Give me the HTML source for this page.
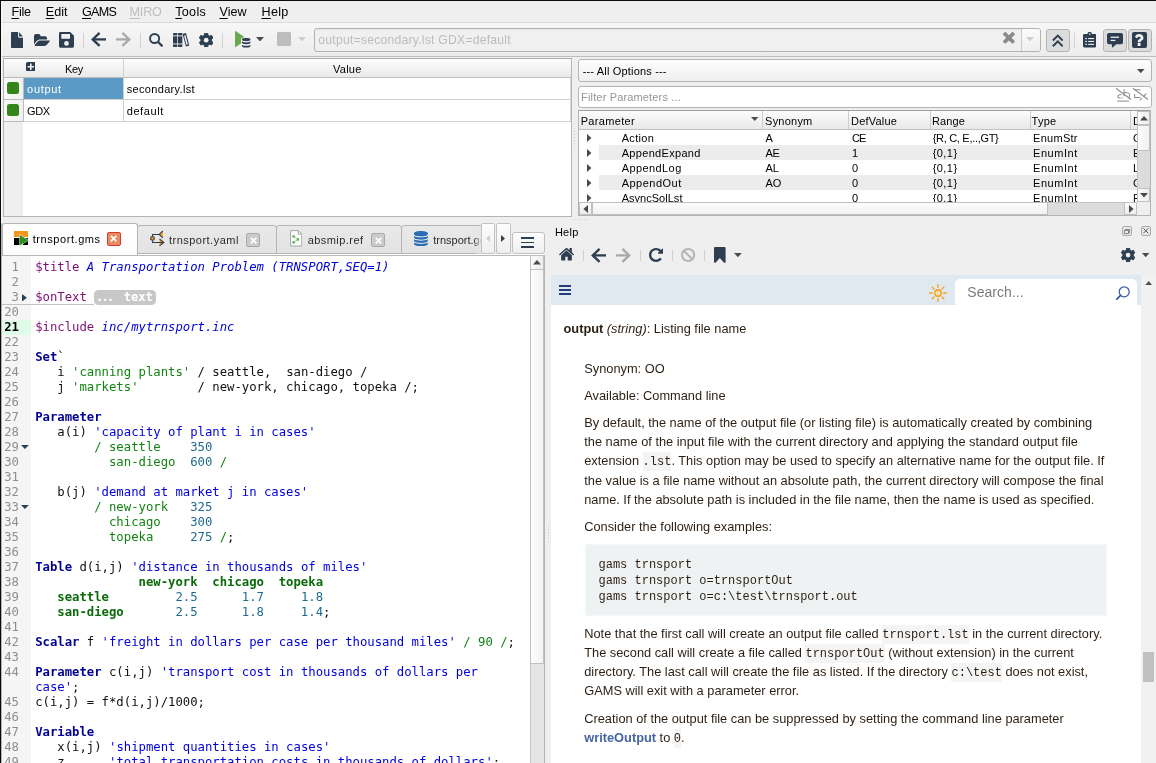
<!DOCTYPE html>
<html lang="en"><head><meta charset="utf-8"><title>GAMS Studio</title>
<style>
html,body{margin:0;padding:0}
body{width:1156px;height:763px;overflow:hidden;background:#efefef;position:relative}
#app{position:absolute;left:0;top:0;width:1156px;height:763px;overflow:hidden;background:#efefef;will-change:transform}
#app div,#app svg,#app span.t{position:absolute;box-sizing:border-box}
#app span.t{white-space:pre;display:block}
#app u{text-decoration:underline;text-underline-offset:1.5px}
</style></head>
<body><div id="app">
<div style="left:0px;top:0px;width:1156px;height:1px;background:#0a0a0a"></div>
<div style="left:1px;top:1px;width:1155px;height:21px;background:#efefef"></div>
<div style="left:1px;top:22px;width:1155px;height:1px;background:#dadada"></div>
<span id="t3" class="t" style="left:11.5px;top:6px;font:400 12.6px/1 'Liberation Sans', sans-serif;color:#000;letter-spacing:-0.278px;"><u>F</u>ile</span>
<span id="t4" class="t" style="left:45.8px;top:6px;font:400 12.6px/1 'Liberation Sans', sans-serif;color:#000;letter-spacing:-0.005px;"><u>E</u>dit</span>
<span id="t5" class="t" style="left:82.0px;top:6px;font:400 12.6px/1 'Liberation Sans', sans-serif;color:#000;letter-spacing:-0.773px;"><u>G</u>AMS</span>
<span id="t6" class="t" style="left:129.5px;top:6px;font:400 12.6px/1 'Liberation Sans', sans-serif;color:#bebebe;letter-spacing:-0.173px;"><u>M</u>IRO</span>
<span id="t7" class="t" style="left:175.3px;top:6px;font:400 12.6px/1 'Liberation Sans', sans-serif;color:#000;letter-spacing:0.259px;"><u>T</u>ools</span>
<span id="t8" class="t" style="left:219.5px;top:6px;font:400 12.6px/1 'Liberation Sans', sans-serif;color:#000;letter-spacing:0.027px;"><u>V</u>iew</span>
<span id="t9" class="t" style="left:261.5px;top:6px;font:400 12.6px/1 'Liberation Sans', sans-serif;color:#000;letter-spacing:0.32px;"><u>H</u>elp</span>
<div style="left:1px;top:23px;width:1155px;height:33px;background:linear-gradient(#f7f7f7,#ececec)"></div>
<div style="left:1px;top:56px;width:1155px;height:1px;background:#bdbdbd"></div>
<svg style="left:11px;top:32px;width:12.2px;height:16px;" viewBox="0 -1536 1536 1792" preserveAspectRatio="none"><path transform="scale(1,-1)" fill="#2c3e50" d="M1024 1024H1496C1487 1038 1478 1050 1468 1060L1060 1468C1050 1478 1038 1487 1024 1496ZM896 992V1536H96C43 1536 0 1493 0 1440V-160C0 -213 43 -256 96 -256H1440C1493 -256 1536 -213 1536 -160V896H992C939 896 896 939 896 992Z"/></svg>
<svg style="left:33.8px;top:34px;width:15.9px;height:11.9px;" viewBox="0 -1408 1879 1408" preserveAspectRatio="none"><path transform="scale(1,-1)" fill="#2c3e50" d="M1879 584C1879 629 1828 640 1792 640H704C616 640 498 586 440 518L104 122C88 104 73 80 73 56C73 11 124 0 160 0H1248C1336 0 1454 54 1512 122L1848 518C1864 536 1879 560 1879 584ZM1536 928C1536 1051 1435 1152 1312 1152H768V1184C768 1307 667 1408 544 1408H224C101 1408 0 1307 0 1184V224C0 216 1 207 1 199L6 205L343 601C424 697 579 768 704 768H1536Z"/></svg>
<svg style="left:59px;top:32px;width:15px;height:15.7px;" viewBox="0 0 15 15.7"><path fill-rule="evenodd" fill="#2c3e50" d="M1.4 0H11.2L15 3.8V14.3a1.4 1.4 0 0 1-1.4 1.4H1.4A1.4 1.4 0 0 1 0 14.3V1.4A1.4 1.4 0 0 1 1.4 0zM2.3 2.1v4.6h8.7V2.1zM7.5 9a2.4 2.4 0 1 0 0 4.8a2.4 2.4 0 1 0 0-4.8z"/></svg>
<div style="left:83px;top:33px;width:1px;height:15px;background:#d2d2d2"></div>
<svg style="left:91px;top:32px;width:15px;height:15px;" viewBox="0 0 15 15"><g fill="none" stroke="#2c3e50" stroke-width="2.3"><path d="M15 7.4H2.2"/><path d="M8.6 .9L1.7 7.4l6.9 6.5" stroke-linejoin="miter"/></g></svg>
<svg style="left:116px;top:32px;width:15px;height:15px;" viewBox="0 0 15 15"><g transform="translate(15 0) scale(-1 1)" fill="none" stroke="#a9a9a9" stroke-width="2.3"><path d="M15 7.4H2.2"/><path d="M8.6 .9L1.7 7.4l6.9 6.5" stroke-linejoin="miter"/></g></svg>
<div style="left:140px;top:33px;width:1px;height:15px;background:#d2d2d2"></div>
<svg style="left:148.8px;top:33px;width:14.4px;height:14px;" viewBox="0 0 14.4 14"><g fill="none" stroke="#2c3e50"><circle cx="5.6" cy="5.5" r="4.55" stroke-width="1.9"/><path d="M8.9 8.8l4.6 4.5" stroke-width="2.3"/></g></svg>
<svg style="left:172.8px;top:33px;width:16.4px;height:14px;" viewBox="0 0 16.4 14"><g fill="#2c3e50"><rect x="0" y="0" width="4.3" height="14" rx=".5"/><rect x="5" y="0" width="4.3" height="14" rx=".5"/><path d="M9.6.9L13 .1l3.3 12.6-3.4.9z"/></g><g fill="#f1f1f1"><rect x="0" y="2.4" width="9.4" height=".9"/><rect x="0" y="10.5" width="9.4" height=".9"/><path d="M11 2.6l1.5-.4 2.4 9.2-1.5.4z"/></g></svg>
<svg style="left:198.9px;top:32.9px;width:14.4px;height:14.4px;" viewBox="0 0 14.4 14.4"><path d="M5.50 2.15L5.63 0.17L8.77 0.17L8.90 2.15L10.72 3.20L12.50 2.33L14.07 5.05L12.42 6.15L12.42 8.25L14.07 9.35L12.50 12.07L10.72 11.20L8.90 12.25L8.77 14.23L5.63 14.23L5.50 12.25L3.68 11.20L1.90 12.07L0.33 9.35L1.98 8.25L1.98 6.15L0.33 5.05L1.90 2.33L3.68 3.20z" fill="#2c3e50" stroke="#2c3e50" stroke-width="1" stroke-linejoin="round"/><circle cx="7.2" cy="7.2" r="2.38" fill="#f1f1f1"/></svg>
<div style="left:222px;top:33px;width:1px;height:15px;background:#d2d2d2"></div>
<svg style="left:234.8px;top:30.8px;width:12.2px;height:16.2px;" viewBox="0 -1416.0170353301835 1407.25 1552.034070660367" preserveAspectRatio="none"><path transform="scale(1,-1)" fill="#6aa84f" d="M1384 609C1415 626 1415 654 1384 671L56 1409C25 1426 0 1411 0 1376V-96C0 -131 25 -146 56 -129Z"/></svg>
<div style="left:241.4px;top:37px;width:9.6px;height:10.4px;background:#f1f1f1;border-radius:4.8px/2.6px"></div>
<svg style="left:242px;top:37.5px;width:8.4px;height:9.3px;overflow:visible;" viewBox="0 0 8.4 9.3"><path d="M0 1.40a4.2 1.40 0 0 1 8.4 0v0.34a4.2 1.40 0 0 1 -8.4 0z M0 3.08a4.2 1.40 0 0 0 8.4 0v1.74a4.2 1.40 0 0 1 -8.4 0z M0 6.45a4.2 1.40 0 0 0 8.4 0v1.74a4.2 1.40 0 0 1 -8.4 0z" fill="#2c3e50"/></svg>
<svg style="left:256.2px;top:37px;width:8px;height:4.4px;" viewBox="0 0 8 4.4"><path d="M0 0h8L4.0 4.4z" fill="#4a4a4a"/></svg>
<div style="left:277px;top:32px;width:14px;height:14px;background:#bdbdbd;border-radius:1.5px"></div>
<svg style="left:298.2px;top:37px;width:8px;height:4.4px;" viewBox="0 0 8 4.4"><path d="M0 0h8L4.0 4.4z" fill="#cfcfcf"/></svg>
<div style="left:314px;top:27.5px;width:727px;height:24px;background:#f0f0f0;border:1px solid #b2b2b2;border-radius:3px;box-shadow:inset 0 1px 1px rgba(0,0,0,.05)"></div>
<div style="left:1020.5px;top:28.5px;width:1px;height:22px;background:#c9c9c9"></div>
<div style="left:1021.5px;top:28.5px;width:18.5px;height:22px;background:linear-gradient(#fbfbfb,#efefef);border-radius:0 2px 2px 0"></div>
<span id="t32" class="t" style="left:318.3px;top:34px;font:400 12.2px/1 'Liberation Sans', sans-serif;color:#bcbcbc;letter-spacing:0.225px;">output=secondary.lst GDX=default</span>
<svg style="left:1003.2px;top:32.2px;width:11.8px;height:11.6px;" viewBox="110 -1170 1188 1188" preserveAspectRatio="none"><path transform="scale(1,-1)" fill="#8a8a8a" d="M1298 214C1298 239 1288 264 1270 282L976 576L1270 870C1288 888 1298 913 1298 938C1298 963 1288 988 1270 1006L1134 1142C1116 1160 1091 1170 1066 1170C1041 1170 1016 1160 998 1142L704 848L410 1142C392 1160 367 1170 342 1170C317 1170 292 1160 274 1142L138 1006C120 988 110 963 110 938C110 913 120 888 138 870L432 576L138 282C120 264 110 239 110 214C110 189 120 164 138 146L274 10C292 -8 317 -18 342 -18C367 -18 392 -8 410 10L704 304L998 10C1016 -8 1041 -18 1066 -18C1091 -18 1116 -8 1134 10L1270 146C1288 164 1298 189 1298 214Z"/></svg>
<svg style="left:1025.6px;top:37px;width:8px;height:4.4px;" viewBox="0 0 8 4.4"><path d="M0 0h8L4.0 4.4z" fill="#cdcdcd"/></svg>
<div style="left:1046px;top:29px;width:23.799999999999955px;height:22.6px;background:#dcdcdc;border:1px solid #b4b4b4;border-radius:3px"></div>
<svg style="left:1051.8px;top:34.2px;width:11.6px;height:13px;" viewBox="0 0 11.6 13"><g fill="none" stroke="#2c3e50" stroke-width="2"><path d="M.9 6.5L5.8 1.6l4.9 4.9"/><path d="M.9 12.3L5.8 7.4l4.9 4.9"/></g></svg>
<div style="left:1074px;top:33px;width:1px;height:15px;background:#d2d2d2"></div>
<svg style="left:1083px;top:32.4px;width:13.4px;height:15.4px;" viewBox="0 0 13.4 15.4"><path fill="#2c3e50" d="M1.4 2h3.1a2.2 2.2 0 0 1 4.4 0H12a1.4 1.4 0 0 1 1.4 1.4v10.6a1.4 1.4 0 0 1-1.4 1.4H1.4A1.4 1.4 0 0 1 0 14V3.4A1.4 1.4 0 0 1 1.4 2z"/><g fill="#f3f3f3"><circle cx="6.7" cy="2.1" r=".8"/><rect x="5.2" y="6" width="5.8" height="1.1"/><rect x="5.2" y="8.9" width="5.8" height="1.1"/><rect x="5.2" y="11.8" width="5.8" height="1.1"/><rect x="2.3" y="5.9" width="1.5" height="1.3"/><rect x="2.3" y="8.8" width="1.5" height="1.3"/><rect x="2.3" y="11.7" width="1.5" height="1.3"/></g></svg>
<div style="left:1103.4px;top:29px;width:23.399999999999864px;height:22.6px;background:#dcdcdc;border:1px solid #b4b4b4;border-radius:3px"></div>
<svg style="left:1107.2px;top:33.2px;width:16px;height:14.6px;" viewBox="0 0 16 14.6"><path fill="#2c3e50" d="M2 0h12a2 2 0 0 1 2 2v7.2a2 2 0 0 1-2 2H9.2L5.6 14.4a.4.4 0 0 1-.7-.3v-2.9H2a2 2 0 0 1-2-2V2a2 2 0 0 1 2-2z"/><rect x="3.6" y="3.6" width="8.4" height="1.3" fill="#ececec"/><rect x="3.6" y="6.8" width="4.8" height="1.3" fill="#ececec"/></svg>
<div style="left:1128.3px;top:29px;width:23.40000000000009px;height:22.6px;background:#dcdcdc;border:1px solid #b4b4b4;border-radius:3px"></div>
<div style="left:1132px;top:31.8px;width:15px;height:16px;background:#2c3e50;border-radius:2px"></div>
<svg style="left:1135.4px;top:34.4px;width:8.5px;height:11.9px;" viewBox="95.84760484933678 -1280 924.1523951506632 1280" preserveAspectRatio="none"><path transform="scale(1,-1)" fill="#efefef" d="M704 280C704 302 686 320 664 320H424C402 320 384 302 384 280V40C384 18 402 0 424 0H664C686 0 704 18 704 40ZM1020 880C1020 1109 780 1280 566 1280C362 1280 210 1193 102 1014C91 996 95 974 112 961L276 836C284 831 292 828 301 828C312 828 324 834 332 844C391 918 415 942 439 959C461 974 502 988 547 988C628 988 701 938 701 882C701 818 669 785 592 750C504 710 384 606 384 485V440C384 418 398 384 420 384H660C683 384 700 410 700 432C700 461 737 530 796 564C891 617 1020 690 1020 880Z"/></svg>
<div style="left:3px;top:58px;width:569px;height:159px;background:#fff;border:1px solid #b5b5b5;border-top-color:#adadad"></div>
<div style="left:4px;top:59px;width:567px;height:18px;background:linear-gradient(#fdfdfd,#e9e9e9)"></div>
<div style="left:4px;top:77px;width:567px;height:1px;background:#bdbdbd"></div>
<div style="left:4px;top:78px;width:19px;height:138px;background:#efefef"></div>
<div style="left:4px;top:78px;width:19px;height:44px;background:linear-gradient(90deg,#f8f8f8,#f1f1f1)"></div>
<div style="left:23px;top:78px;width:1px;height:44px;background:#bcbcbc"></div>
<div style="left:4px;top:99px;width:19px;height:1px;background:#bcbcbc"></div>
<div style="left:4px;top:121px;width:19px;height:1px;background:#bcbcbc"></div>
<div style="left:123px;top:59px;width:1px;height:63px;background:#cfcfcf"></div>
<div style="left:24px;top:99px;width:547px;height:1px;background:#d0d0d0"></div>
<div style="left:24px;top:121px;width:547px;height:1px;background:#d0d0d0"></div>
<div style="left:570px;top:78px;width:1px;height:44px;background:#d8d8d8"></div>
<div style="left:24px;top:78px;width:99px;height:21px;background:#5b9ac4"></div>
<svg style="left:25.6px;top:61.7px;width:9.6px;height:9.6px;" viewBox="0 -1408 1536 1536" preserveAspectRatio="none"><path transform="scale(1,-1)" fill="#2c3e50" d="M1280 576C1280 541 1251 512 1216 512H896V192C896 157 867 128 832 128H704C669 128 640 157 640 192V512H320C285 512 256 541 256 576V704C256 739 285 768 320 768H640V1088C640 1123 669 1152 704 1152H832C867 1152 896 1123 896 1088V768H1216C1251 768 1280 739 1280 704V576ZM1536 1120C1536 1279 1407 1408 1248 1408H288C129 1408 0 1279 0 1120V160C0 1 129 -128 288 -128H1248C1407 -128 1536 1 1536 160Z"/></svg>
<span id="t58" class="t" style="left:65.1px;top:64px;font:400 11px/1 'Liberation Sans', sans-serif;color:#000;letter-spacing:-0.39px;">Key</span>
<span id="t59" class="t" style="left:333.1px;top:64px;font:400 11px/1 'Liberation Sans', sans-serif;color:#000;letter-spacing:0.214px;">Value</span>
<div style="left:7px;top:82px;width:12px;height:11.8px;background:#35861a;border-radius:2.5px"></div>
<div style="left:7px;top:104px;width:12px;height:11.8px;background:#35861a;border-radius:2.5px"></div>
<span id="t62" class="t" style="left:27.1px;top:84px;font:400 11px/1 'Liberation Sans', sans-serif;color:#fff;letter-spacing:0.668px;">output</span>
<span id="t63" class="t" style="left:126.7px;top:84px;font:400 11px/1 'Liberation Sans', sans-serif;color:#000;letter-spacing:0.331px;">secondary.lst</span>
<span id="t64" class="t" style="left:27.1px;top:106px;font:400 11px/1 'Liberation Sans', sans-serif;color:#000;letter-spacing:-0.415px;">GDX</span>
<span id="t65" class="t" style="left:126.7px;top:106px;font:400 11px/1 'Liberation Sans', sans-serif;color:#000;letter-spacing:0.596px;">default</span>
<div style="left:574px;top:128px;width:1px;height:20px;background:repeating-linear-gradient(#d2d2d2 0 1px,transparent 1px 3px)"></div>
<div style="left:572px;top:219px;width:18px;height:1px;background:repeating-linear-gradient(90deg,#d2d2d2 0 1px,transparent 1px 3px)"></div>
<div style="left:578px;top:59px;width:573.5px;height:23.4px;background:linear-gradient(#fdfdfd,#efefef);border:1px solid #b4b4b4;border-radius:3px"></div>
<span id="t69" class="t" style="left:582.7px;top:66px;font:400 11px/1 'Liberation Sans', sans-serif;color:#000;letter-spacing:0.174px;">--- All Options ---</span>
<svg style="left:1137.2px;top:68.6px;width:7.6px;height:4.2px;" viewBox="0 0 7.6 4.2"><path d="M0 0h7.6L3.8 4.2z" fill="#4a4a4a"/></svg>
<div style="left:578px;top:86px;width:573.5px;height:21.6px;background:#fff;border:1px solid #b4b4b4;border-radius:3px"></div>
<span id="t72" class="t" style="left:581.1px;top:92px;font:400 11px/1 'Liberation Sans', sans-serif;color:#959595;letter-spacing:0.153px;">Filter Parameters ...</span>
<svg style="left:1116px;top:88px;width:33px;height:14.4px;" viewBox="0 0 33 14.4"><g fill="none" stroke="#8e8e8e" stroke-width="1.05"><path d="M0 .3L15 11.6" stroke-width="1.2"/><path d="M1.2 13.1H12.9"/><path d="M8 1.2V8.2M8 4.6q5.6-.8 5.6 2.8 0 1.6-1 2.4M5.5 6.6q-3.6 0-3.6 2 0 1.6 2.6 1.6"/><path d="M17 .3L32 11.6" stroke-width="1.2"/><path d="M18.1 1.7H24.6M18.6 6V9.6H24.4M23.6 12.3l2.5-2.1M27.4 8.8l2.8-3.2"/></g><circle cx="6" cy="9.9" r=".6" fill="#8e8e8e"/></svg>
<div style="left:578.4px;top:110.4px;width:573px;height:106px;background:#fff;border:1px solid #b3b3b3;border-top-color:#9f9f9f"></div>
<div style="left:579.4px;top:111.4px;width:558px;height:18px;background:linear-gradient(#fdfdfd,#e8e8e8)"></div>
<div style="left:579.4px;top:129.2px;width:558px;height:1px;background:#c2c2c2"></div>
<div style="left:762.4px;top:111.4px;width:1px;height:18px;background:#cdcdcd"></div>
<div style="left:848px;top:111.4px;width:1px;height:18px;background:#cdcdcd"></div>
<div style="left:929.6px;top:111.4px;width:1px;height:18px;background:#cdcdcd"></div>
<div style="left:1030px;top:111.4px;width:1px;height:18px;background:#cdcdcd"></div>
<div style="left:1130px;top:111.4px;width:1px;height:18px;background:#cdcdcd"></div>
<svg style="left:751.4px;top:116.6px;width:7.4px;height:4px;" viewBox="0 0 7.4 4"><path d="M0 0h7.4L3.7 4z" fill="#4a4a4a"/></svg>
<span id="t83" class="t" style="left:580.7px;top:116px;font:400 11px/1 'Liberation Sans', sans-serif;color:#000;letter-spacing:0.327px;">Parameter</span>
<span id="t84" class="t" style="left:765.1px;top:116px;font:400 11px/1 'Liberation Sans', sans-serif;color:#000;letter-spacing:0.22px;">Synonym</span>
<span id="t85" class="t" style="left:851.1px;top:116px;font:400 11px/1 'Liberation Sans', sans-serif;color:#000;letter-spacing:0.195px;">DefValue</span>
<span id="t86" class="t" style="left:931.9px;top:116px;font:400 11px/1 'Liberation Sans', sans-serif;color:#000;letter-spacing:0.116px;">Range</span>
<span id="t87" class="t" style="left:1031.5px;top:116px;font:400 11px/1 'Liberation Sans', sans-serif;color:#000;letter-spacing:0.285px;">Type</span>
<span id="t88" class="t" style="left:1133px;top:116px;font:400 11px/1 'Liberation Sans', sans-serif;color:#000;width:4.4px;overflow:hidden;">D</span>
<svg style="left:587px;top:134.2px;width:5px;height:8px;" viewBox="0 0 5 8"><path d="M0 0L4.4 4 0 8z" fill="#4a4a4a"/></svg>
<span id="t90" class="t" style="left:621.7px;top:133px;font:400 11px/1 'Liberation Sans', sans-serif;color:#000;letter-spacing:0.337px;">Action</span>
<span id="t91" class="t" style="left:765.5px;top:133px;font:400 11px/1 'Liberation Sans', sans-serif;color:#000;letter-spacing:0.456px;">A</span>
<span id="t92" class="t" style="left:852.1px;top:133px;font:400 11px/1 'Liberation Sans', sans-serif;color:#000;letter-spacing:-1.141px;">CE</span>
<span id="t93" class="t" style="left:932.7px;top:133px;font:400 11px/1 'Liberation Sans', sans-serif;color:#000;letter-spacing:-0.3px;">{R, C, E,..,GT}</span>
<span id="t94" class="t" style="left:1033.1px;top:133px;font:400 11px/1 'Liberation Sans', sans-serif;color:#000;letter-spacing:0.272px;">EnumStr</span>
<span id="t95" class="t" style="left:1133px;top:133px;font:400 11px/1 'Liberation Sans', sans-serif;color:#000;width:4.4px;overflow:hidden;">C</span>
<div style="left:599px;top:145px;width:538px;height:15px;background:#ececec"></div>
<svg style="left:587px;top:149.2px;width:5px;height:8px;" viewBox="0 0 5 8"><path d="M0 0L4.4 4 0 8z" fill="#4a4a4a"/></svg>
<span id="t98" class="t" style="left:621.7px;top:148px;font:400 11px/1 'Liberation Sans', sans-serif;color:#000;letter-spacing:0.314px;">AppendExpand</span>
<span id="t99" class="t" style="left:765.5px;top:148px;font:400 11px/1 'Liberation Sans', sans-serif;color:#000;letter-spacing:-0.344px;">AE</span>
<span id="t100" class="t" style="left:852.1px;top:148px;font:400 11px/1 'Liberation Sans', sans-serif;color:#000;letter-spacing:-0.725px;">1</span>
<span id="t101" class="t" style="left:932.7px;top:148px;font:400 11px/1 'Liberation Sans', sans-serif;color:#000;letter-spacing:0.432px;">{0,1}</span>
<span id="t102" class="t" style="left:1033.1px;top:148px;font:400 11px/1 'Liberation Sans', sans-serif;color:#000;letter-spacing:0.533px;">EnumInt</span>
<span id="t103" class="t" style="left:1133px;top:148px;font:400 11px/1 'Liberation Sans', sans-serif;color:#000;width:4.4px;overflow:hidden;">E</span>
<svg style="left:587px;top:164.2px;width:5px;height:8px;" viewBox="0 0 5 8"><path d="M0 0L4.4 4 0 8z" fill="#4a4a4a"/></svg>
<span id="t105" class="t" style="left:621.7px;top:163px;font:400 11px/1 'Liberation Sans', sans-serif;color:#000;letter-spacing:0.413px;">AppendLog</span>
<span id="t106" class="t" style="left:765.5px;top:163px;font:400 11px/1 'Liberation Sans', sans-serif;color:#000;letter-spacing:0.016px;">AL</span>
<span id="t107" class="t" style="left:852.1px;top:163px;font:400 11px/1 'Liberation Sans', sans-serif;color:#000;letter-spacing:0.675px;">0</span>
<span id="t108" class="t" style="left:932.7px;top:163px;font:400 11px/1 'Liberation Sans', sans-serif;color:#000;letter-spacing:0.432px;">{0,1}</span>
<span id="t109" class="t" style="left:1033.1px;top:163px;font:400 11px/1 'Liberation Sans', sans-serif;color:#000;letter-spacing:0.533px;">EnumInt</span>
<span id="t110" class="t" style="left:1133px;top:163px;font:400 11px/1 'Liberation Sans', sans-serif;color:#000;width:4.4px;overflow:hidden;">L</span>
<div style="left:599px;top:175px;width:538px;height:15px;background:#ececec"></div>
<svg style="left:587px;top:179.2px;width:5px;height:8px;" viewBox="0 0 5 8"><path d="M0 0L4.4 4 0 8z" fill="#4a4a4a"/></svg>
<span id="t113" class="t" style="left:621.7px;top:178px;font:400 11px/1 'Liberation Sans', sans-serif;color:#000;letter-spacing:0.483px;">AppendOut</span>
<span id="t114" class="t" style="left:765.5px;top:178px;font:400 11px/1 'Liberation Sans', sans-serif;color:#000;letter-spacing:-0.053px;">AO</span>
<span id="t115" class="t" style="left:852.1px;top:178px;font:400 11px/1 'Liberation Sans', sans-serif;color:#000;letter-spacing:0.675px;">0</span>
<span id="t116" class="t" style="left:932.7px;top:178px;font:400 11px/1 'Liberation Sans', sans-serif;color:#000;letter-spacing:0.432px;">{0,1}</span>
<span id="t117" class="t" style="left:1033.1px;top:178px;font:400 11px/1 'Liberation Sans', sans-serif;color:#000;letter-spacing:0.533px;">EnumInt</span>
<span id="t118" class="t" style="left:1133px;top:178px;font:400 11px/1 'Liberation Sans', sans-serif;color:#000;width:4.4px;overflow:hidden;">C</span>
<svg style="left:587px;top:194.2px;width:5px;height:8px;" viewBox="0 0 5 8"><path d="M0 0L4.4 4 0 8z" fill="#4a4a4a"/></svg>
<span id="t120" class="t" style="left:621.7px;top:193px;font:400 11px/1 'Liberation Sans', sans-serif;color:#000;letter-spacing:0.024px;">AsyncSolLst</span>
<span id="t121" class="t" style="left:852.1px;top:193px;font:400 11px/1 'Liberation Sans', sans-serif;color:#000;letter-spacing:0.675px;">0</span>
<span id="t122" class="t" style="left:932.7px;top:193px;font:400 11px/1 'Liberation Sans', sans-serif;color:#000;letter-spacing:0.432px;">{0,1}</span>
<span id="t123" class="t" style="left:1033.1px;top:193px;font:400 11px/1 'Liberation Sans', sans-serif;color:#000;letter-spacing:0.533px;">EnumInt</span>
<span id="t124" class="t" style="left:1133px;top:193px;font:400 11px/1 'Liberation Sans', sans-serif;color:#000;width:4.4px;overflow:hidden;">F</span>
<div style="left:579.4px;top:202.4px;width:571px;height:13px;background:#dcdcdc;border-top:1px solid #c4c4c4"></div>
<div style="left:579.4px;top:202.4px;width:13px;height:13px;background:linear-gradient(#fcfcfc,#ededed);border:1px solid #c0c0c0"></div>
<svg style="left:583.4px;top:205.2px;width:5px;height:8px;" viewBox="0 0 5 8"><path d="M5 0L.4 4 5 8z" fill="#4a4a4a"/></svg>
<div style="left:592.4px;top:202.4px;width:455.6px;height:13px;background:linear-gradient(#fdfdfd,#f1f1f1);border:1px solid #c0c0c0"></div>
<div style="left:1124.4px;top:202.4px;width:13px;height:13px;background:linear-gradient(#fcfcfc,#ededed);border:1px solid #c0c0c0"></div>
<svg style="left:1128.8px;top:205.2px;width:5px;height:8px;" viewBox="0 0 5 8"><path d="M0 0L4.6 4 0 8z" fill="#4a4a4a"/></svg>
<div style="left:1137.4px;top:202.4px;width:13px;height:13px;background:#efefef"></div>
<div style="left:1137.4px;top:111.4px;width:13px;height:91px;background:#dcdcdc;border-left:1px solid #c4c4c4"></div>
<div style="left:1137.4px;top:111.4px;width:13px;height:13.4px;background:linear-gradient(90deg,#fcfcfc,#ededed);border:1px solid #c0c0c0"></div>
<svg style="left:1140.4px;top:116px;width:8px;height:5px;" viewBox="0 0 8 5"><path d="M0 4.6L4 0 8 4.6z" fill="#4a4a4a"/></svg>
<div style="left:1137.4px;top:124.8px;width:13px;height:26.4px;background:linear-gradient(90deg,#fdfdfd,#f1f1f1);border:1px solid #c0c0c0"></div>
<div style="left:1137.4px;top:188.4px;width:13px;height:13.4px;background:linear-gradient(90deg,#fcfcfc,#ededed);border:1px solid #c0c0c0"></div>
<svg style="left:1140.4px;top:193px;width:8px;height:5px;" viewBox="0 0 8 5"><path d="M0 0L4 4.6 8 0z" fill="#4a4a4a"/></svg>
<div style="left:0px;top:0px;width:1px;height:763px;background:#0a0a0a"></div>
<div style="left:1px;top:1px;width:1px;height:222px;background:#f8f8f8"></div>
<div style="left:1px;top:223px;width:1px;height:540px;background:#b4b4b4"></div>
<div style="left:137px;top:225px;width:140px;height:29px;background:linear-gradient(#e9e9e9,#e3e3e3);border:1px solid #b4b4b4;border-radius:3px 3px 0 0"></div>
<div style="left:276px;top:225px;width:126px;height:29px;background:linear-gradient(#e9e9e9,#e3e3e3);border:1px solid #b4b4b4;border-radius:3px 3px 0 0"></div>
<div style="left:401px;top:225px;width:82px;height:29px;background:linear-gradient(#e9e9e9,#e3e3e3);border:1px solid #b4b4b4;border-radius:3px 3px 0 0"></div>
<div style="left:2px;top:254px;width:543px;height:1px;background:#fff"></div>
<div style="left:2px;top:255px;width:543px;height:1px;background:#b8b8b8"></div>
<div style="left:2px;top:223px;width:136px;height:32px;background:linear-gradient(#fff,#fbfbfb);border:1px solid #b4b4b4;border-bottom:none;border-radius:3px 3px 0 0"></div>
<div style="left:13.8px;top:231px;width:14px;height:5.8px;background:#f39619"></div>
<div style="left:13.8px;top:237.6px;width:7px;height:7.2px;background:#000"></div>
<div style="left:23px;top:237.6px;width:5px;height:7.2px;background:#000"></div>
<svg style="left:19.4px;top:233.6px;width:10.4px;height:12.4px;" viewBox="0 0 10.4 12.4"><path d="M.4.4L9.8 6.2.4 12z" fill="#2f8f1f" stroke="#fff" stroke-width=".5"/></svg>
<span id="t151" class="t" style="left:32.7px;top:234px;font:400 11px/1 'Liberation Sans', sans-serif;color:#000;letter-spacing:0.572px;">trnsport.gms</span>
<div style="left:107px;top:232px;width:14px;height:13.8px;background:#e98b62;border:1px solid #d63a2c;border-radius:2px"></div>
<svg style="left:110.4px;top:235.3px;width:7.2px;height:7.2px;" viewBox="0 0 7.2 7.2"><path d="M.8.8l5.6 5.6M6.4.8L.8 6.4" stroke="#fff" stroke-width="1.7" fill="none"/></svg>
<svg style="left:150px;top:230px;width:15px;height:17px;" viewBox="0 0 15 17"><path d="M9.2 4.4L12.8 1V7.8z" fill="#f59a14"/><path d="M9.5 9l4.4 3.4-4.4 3.4z" fill="#f59a14"/><g fill="none" stroke="#2c3e50" stroke-width="1.05"><path d="M2.5 6.4V4.4H9.4M12.8 1L9.2 4.4l3.6 3.4"/><path d="M2.5 10.4v2H13.6M9.5 9l4.4 3.4-4.4 3.4"/><circle cx="2.5" cy="8.4" r="1.9" fill="#f59a14"/></g></svg>
<span id="t155" class="t" style="left:169.0px;top:235px;font:400 11px/1 'Liberation Sans', sans-serif;color:#2b2b2b;letter-spacing:0.479px;">trnsport.yaml</span>
<div style="left:246.3px;top:233.2px;width:13.6px;height:13.6px;background:#cbcbcb;border:1px solid #a9a9a9;border-radius:2px"></div>
<svg style="left:249.70000000000002px;top:236.5px;width:7.2px;height:7.2px;" viewBox="0 0 7.2 7.2"><path d="M.8.8l5.6 5.6M6.4.8L.8 6.4" stroke="#fff" stroke-width="1.7" fill="none"/></svg>
<svg style="left:290px;top:230.4px;width:12.4px;height:16.6px;" viewBox="0 0 12.4 16.6"><path d="M.6.6h7.6l3.6 3.6V16H.6z" fill="#fcfcfc" stroke="#a5a5a5" stroke-width="1"/><path d="M8.2.6v3.6h3.6" fill="none" stroke="#a5a5a5"/><g fill="#5cb85c"><circle cx="3.6" cy="6.4" r="1.3"/><circle cx="3.6" cy="12.4" r="1.3"/><circle cx="8" cy="9.4" r="1.3"/></g><path d="M3.6 6.4L8 9.4 3.6 12.4" fill="none" stroke="#5cb85c" stroke-width=".7"/></svg>
<span id="t159" class="t" style="left:307.7px;top:235px;font:400 11px/1 'Liberation Sans', sans-serif;color:#2b2b2b;letter-spacing:0.444px;">absmip.ref</span>
<div style="left:371.2px;top:233.2px;width:13.6px;height:13.6px;background:#cbcbcb;border:1px solid #a9a9a9;border-radius:2px"></div>
<svg style="left:374.59999999999997px;top:236.5px;width:7.2px;height:7.2px;" viewBox="0 0 7.2 7.2"><path d="M.8.8l5.6 5.6M6.4.8L.8 6.4" stroke="#fff" stroke-width="1.7" fill="none"/></svg>
<svg style="left:413.8px;top:231px;width:13.8px;height:15.2px;" viewBox="0 -1536 1536 1792" preserveAspectRatio="none"><path transform="scale(1,-1)" fill="#2a6db5" d="M768 768C467 768 165 822 0 938V768C0 627 344 512 768 512C1192 512 1536 627 1536 768V938C1371 822 1069 768 768 768ZM768 0C467 0 165 54 0 170V0C0 -141 344 -256 768 -256C1192 -256 1536 -141 1536 0V170C1371 54 1069 0 768 0ZM768 384C467 384 165 438 0 554V384C0 243 344 128 768 128C1192 128 1536 243 1536 384V554C1371 438 1069 384 768 384ZM768 1536C344 1536 0 1421 0 1280V1152C0 1011 344 896 768 896C1192 896 1536 1011 1536 1152V1280C1536 1421 1192 1536 768 1536Z"/></svg>
<span id="t163" class="t" style="left:433.2px;top:235px;font:400 11px/1 'Liberation Sans', sans-serif;color:#2b2b2b;width:48.3px;overflow:hidden;">trnsport.gdx</span>
<div style="left:474px;top:227px;width:8px;height:27px;background:linear-gradient(90deg,rgba(229,229,229,0),#e6e6e6)"></div>
<div style="left:480.8px;top:223.2px;width:14.4px;height:31.2px;background:linear-gradient(#fdfdfd,#eeeeee);border:1px solid #c3c3c3;border-radius:2px"></div>
<div style="left:495.6px;top:223.2px;width:15px;height:31.2px;background:linear-gradient(#fdfdfd,#eeeeee);border:1px solid #c3c3c3;border-radius:2px"></div>
<svg style="left:486.2px;top:235.4px;width:4px;height:7px;" viewBox="0 0 4 7"><path d="M4 0L0 3.5 4 7z" fill="#d0d0d0"/></svg>
<svg style="left:501px;top:235.4px;width:4px;height:7px;" viewBox="0 0 4 7"><path d="M0 0l4 3.5L0 7z" fill="#3c3c3c"/></svg>
<div style="left:511.8px;top:231.6px;width:32.8px;height:22.6px;background:linear-gradient(#fdfdfd,#efefef);border:1px solid #c0c0c0;border-radius:3px"></div>
<div style="left:521px;top:237px;width:13px;height:1.6px;background:#2c3e50"></div>
<div style="left:521px;top:241.6px;width:13px;height:1.6px;background:#2c3e50"></div>
<div style="left:521px;top:246.2px;width:13px;height:1.6px;background:#2c3e50"></div>
<div style="left:2px;top:256px;width:543px;height:507px;background:#fff;border-right:1px solid #b4b4b4"></div>
<div style="left:2px;top:256px;width:28.8px;height:507px;background:#f5f5f5"></div>
<div style="left:2px;top:320px;width:28.8px;height:15px;background:#e0fbe8"></div>
<div style="left:2px;top:304px;width:92px;height:1px;background:#c2c2c2"></div>
<div style="left:530.4px;top:255.4px;width:13.6px;height:508px;background:#e4e4e4;border-left:1px solid #c6c6c6"></div>
<div style="left:530.4px;top:255.4px;width:13.6px;height:14.2px;background:linear-gradient(90deg,#fcfcfc,#ededed);border:1px solid #c0c0c0"></div>
<svg style="left:533.4px;top:260.4px;width:8px;height:5px;" viewBox="0 0 8 5"><path d="M0 4.6L4 0 8 4.6z" fill="#4a4a4a"/></svg>
<div style="left:530.4px;top:269.2px;width:13.6px;height:394.8px;background:linear-gradient(90deg,#fdfdfd,#f2f2f2);border:1px solid #c0c0c0"></div>
<div style="left:548px;top:526px;width:1px;height:18px;background:repeating-linear-gradient(#d2d2d2 0 1px,transparent 1px 3px)"></div>
<span id="t182" class="t" style="left:11.6px;top:261px;font:400 12.29px/1 'DejaVu Sans Mono', 'Liberation Mono', monospace;color:#8e8e8e;">1</span>
<span id="t183" class="t" style="left:35.2px;top:261px;font:400 12.29px/1 'DejaVu Sans Mono', 'Liberation Mono', monospace;color:#000;letter-spacing:-0.014px;"><span style="color:#7d0f75;">$title</span><span style="color:#0000dc;font-style:italic;"> A Transportation Problem (TRNSPORT,SEQ=1)</span></span>
<span id="t184" class="t" style="left:11.6px;top:276px;font:400 12.29px/1 'DejaVu Sans Mono', 'Liberation Mono', monospace;color:#8e8e8e;">2</span>
<span id="t185" class="t" style="left:11.6px;top:291px;font:400 12.29px/1 'DejaVu Sans Mono', 'Liberation Mono', monospace;color:#8e8e8e;">3</span>
<span id="t186" class="t" style="left:35.2px;top:291px;font:400 12.29px/1 'DejaVu Sans Mono', 'Liberation Mono', monospace;color:#000;letter-spacing:-0.014px;"><span style="color:#7d0f75;">$onText</span></span>
<span id="t187" class="t" style="left:4.2px;top:306px;font:400 12.29px/1 'DejaVu Sans Mono', 'Liberation Mono', monospace;color:#8e8e8e;">20</span>
<span id="t188" class="t" style="left:4.2px;top:321px;font:700 12.29px/1 'DejaVu Sans Mono', 'Liberation Mono', monospace;color:#000;">21</span>
<span id="t189" class="t" style="left:35.2px;top:321px;font:400 12.29px/1 'DejaVu Sans Mono', 'Liberation Mono', monospace;color:#000;letter-spacing:-0.014px;"><span style="color:#7d0f75;">$include</span><span style="color:#0000dc;font-style:italic;"> inc/mytrnsport.inc</span></span>
<span id="t190" class="t" style="left:4.2px;top:336px;font:400 12.29px/1 'DejaVu Sans Mono', 'Liberation Mono', monospace;color:#8e8e8e;">22</span>
<span id="t191" class="t" style="left:4.2px;top:351px;font:400 12.29px/1 'DejaVu Sans Mono', 'Liberation Mono', monospace;color:#8e8e8e;">23</span>
<span id="t192" class="t" style="left:35.2px;top:351px;font:400 12.29px/1 'DejaVu Sans Mono', 'Liberation Mono', monospace;color:#000;letter-spacing:-0.014px;"><span style="color:#000094;font-weight:700;">Set</span><span style="color:#111;">`</span></span>
<span id="t193" class="t" style="left:4.2px;top:366px;font:400 12.29px/1 'DejaVu Sans Mono', 'Liberation Mono', monospace;color:#8e8e8e;">24</span>
<span id="t194" class="t" style="left:35.2px;top:366px;font:400 12.29px/1 'DejaVu Sans Mono', 'Liberation Mono', monospace;color:#000;letter-spacing:-0.014px;"><span style="color:#111;">   i </span><span style="color:#138213;">'canning plants'</span><span style="color:#111;"> / seattle,  san-diego /</span></span>
<span id="t195" class="t" style="left:4.2px;top:381px;font:400 12.29px/1 'DejaVu Sans Mono', 'Liberation Mono', monospace;color:#8e8e8e;">25</span>
<span id="t196" class="t" style="left:35.2px;top:381px;font:400 12.29px/1 'DejaVu Sans Mono', 'Liberation Mono', monospace;color:#000;letter-spacing:-0.014px;"><span style="color:#111;">   j </span><span style="color:#138213;">'markets'</span><span style="color:#111;">        / new-york, chicago, topeka /;</span></span>
<span id="t197" class="t" style="left:4.2px;top:396px;font:400 12.29px/1 'DejaVu Sans Mono', 'Liberation Mono', monospace;color:#8e8e8e;">26</span>
<span id="t198" class="t" style="left:4.2px;top:411px;font:400 12.29px/1 'DejaVu Sans Mono', 'Liberation Mono', monospace;color:#8e8e8e;">27</span>
<span id="t199" class="t" style="left:35.2px;top:411px;font:400 12.29px/1 'DejaVu Sans Mono', 'Liberation Mono', monospace;color:#000;letter-spacing:-0.014px;"><span style="color:#000094;font-weight:700;">Parameter</span></span>
<span id="t200" class="t" style="left:4.2px;top:426px;font:400 12.29px/1 'DejaVu Sans Mono', 'Liberation Mono', monospace;color:#8e8e8e;">28</span>
<span id="t201" class="t" style="left:35.2px;top:426px;font:400 12.29px/1 'DejaVu Sans Mono', 'Liberation Mono', monospace;color:#000;letter-spacing:-0.014px;"><span style="color:#111;">   a(i) </span><span style="color:#0000dc;">'capacity of plant i in cases'</span></span>
<span id="t202" class="t" style="left:4.2px;top:441px;font:400 12.29px/1 'DejaVu Sans Mono', 'Liberation Mono', monospace;color:#8e8e8e;">29</span>
<span id="t203" class="t" style="left:35.2px;top:441px;font:400 12.29px/1 'DejaVu Sans Mono', 'Liberation Mono', monospace;color:#000;letter-spacing:-0.014px;"><span style="color:#138213;">        / seattle    </span><span style="color:#1f6a90;">350</span></span>
<span id="t204" class="t" style="left:4.2px;top:456px;font:400 12.29px/1 'DejaVu Sans Mono', 'Liberation Mono', monospace;color:#8e8e8e;">30</span>
<span id="t205" class="t" style="left:35.2px;top:456px;font:400 12.29px/1 'DejaVu Sans Mono', 'Liberation Mono', monospace;color:#000;letter-spacing:-0.014px;"><span style="color:#138213;">          san-diego  </span><span style="color:#1f6a90;">600</span><span style="color:#138213;"> /</span></span>
<span id="t206" class="t" style="left:4.2px;top:471px;font:400 12.29px/1 'DejaVu Sans Mono', 'Liberation Mono', monospace;color:#8e8e8e;">31</span>
<span id="t207" class="t" style="left:4.2px;top:486px;font:400 12.29px/1 'DejaVu Sans Mono', 'Liberation Mono', monospace;color:#8e8e8e;">32</span>
<span id="t208" class="t" style="left:35.2px;top:486px;font:400 12.29px/1 'DejaVu Sans Mono', 'Liberation Mono', monospace;color:#000;letter-spacing:-0.014px;"><span style="color:#111;">   b(j) </span><span style="color:#0000dc;">'demand at market j in cases'</span></span>
<span id="t209" class="t" style="left:4.2px;top:501px;font:400 12.29px/1 'DejaVu Sans Mono', 'Liberation Mono', monospace;color:#8e8e8e;">33</span>
<span id="t210" class="t" style="left:35.2px;top:501px;font:400 12.29px/1 'DejaVu Sans Mono', 'Liberation Mono', monospace;color:#000;letter-spacing:-0.014px;"><span style="color:#138213;">        / new-york   </span><span style="color:#1f6a90;">325</span></span>
<span id="t211" class="t" style="left:4.2px;top:516px;font:400 12.29px/1 'DejaVu Sans Mono', 'Liberation Mono', monospace;color:#8e8e8e;">34</span>
<span id="t212" class="t" style="left:35.2px;top:516px;font:400 12.29px/1 'DejaVu Sans Mono', 'Liberation Mono', monospace;color:#000;letter-spacing:-0.014px;"><span style="color:#138213;">          chicago    </span><span style="color:#1f6a90;">300</span></span>
<span id="t213" class="t" style="left:4.2px;top:531px;font:400 12.29px/1 'DejaVu Sans Mono', 'Liberation Mono', monospace;color:#8e8e8e;">35</span>
<span id="t214" class="t" style="left:35.2px;top:531px;font:400 12.29px/1 'DejaVu Sans Mono', 'Liberation Mono', monospace;color:#000;letter-spacing:-0.014px;"><span style="color:#138213;">          topeka     </span><span style="color:#1f6a90;">275</span><span style="color:#138213;"> /</span><span style="color:#111;">;</span></span>
<span id="t215" class="t" style="left:4.2px;top:546px;font:400 12.29px/1 'DejaVu Sans Mono', 'Liberation Mono', monospace;color:#8e8e8e;">36</span>
<span id="t216" class="t" style="left:4.2px;top:561px;font:400 12.29px/1 'DejaVu Sans Mono', 'Liberation Mono', monospace;color:#8e8e8e;">37</span>
<span id="t217" class="t" style="left:35.2px;top:561px;font:400 12.29px/1 'DejaVu Sans Mono', 'Liberation Mono', monospace;color:#000;letter-spacing:-0.014px;"><span style="color:#000094;font-weight:700;">Table</span><span style="color:#111;"> d(i,j) </span><span style="color:#0000dc;">'distance in thousands of miles'</span></span>
<span id="t218" class="t" style="left:4.2px;top:576px;font:400 12.29px/1 'DejaVu Sans Mono', 'Liberation Mono', monospace;color:#8e8e8e;">38</span>
<span id="t219" class="t" style="left:35.2px;top:576px;font:400 12.29px/1 'DejaVu Sans Mono', 'Liberation Mono', monospace;color:#000;letter-spacing:-0.014px;"><span style="color:#0a6a0a;font-weight:700;">              new-york  chicago  topeka</span></span>
<span id="t220" class="t" style="left:4.2px;top:591px;font:400 12.29px/1 'DejaVu Sans Mono', 'Liberation Mono', monospace;color:#8e8e8e;">39</span>
<span id="t221" class="t" style="left:35.2px;top:591px;font:400 12.29px/1 'DejaVu Sans Mono', 'Liberation Mono', monospace;color:#000;letter-spacing:-0.014px;"><span style="color:#0a6a0a;font-weight:700;">   seattle</span><span style="color:#1f6a90;">         2.5      1.7     1.8</span></span>
<span id="t222" class="t" style="left:4.2px;top:606px;font:400 12.29px/1 'DejaVu Sans Mono', 'Liberation Mono', monospace;color:#8e8e8e;">40</span>
<span id="t223" class="t" style="left:35.2px;top:606px;font:400 12.29px/1 'DejaVu Sans Mono', 'Liberation Mono', monospace;color:#000;letter-spacing:-0.014px;"><span style="color:#0a6a0a;font-weight:700;">   san-diego</span><span style="color:#1f6a90;">       2.5      1.8     1.4</span><span style="color:#111;">;</span></span>
<span id="t224" class="t" style="left:4.2px;top:621px;font:400 12.29px/1 'DejaVu Sans Mono', 'Liberation Mono', monospace;color:#8e8e8e;">41</span>
<span id="t225" class="t" style="left:4.2px;top:636px;font:400 12.29px/1 'DejaVu Sans Mono', 'Liberation Mono', monospace;color:#8e8e8e;">42</span>
<span id="t226" class="t" style="left:35.2px;top:636px;font:400 12.29px/1 'DejaVu Sans Mono', 'Liberation Mono', monospace;color:#000;letter-spacing:-0.014px;"><span style="color:#000094;font-weight:700;">Scalar</span><span style="color:#111;"> f </span><span style="color:#0000dc;">'freight in dollars per case per thousand miles'</span><span style="color:#138213;"> / 90 /</span><span style="color:#111;">;</span></span>
<span id="t227" class="t" style="left:4.2px;top:651px;font:400 12.29px/1 'DejaVu Sans Mono', 'Liberation Mono', monospace;color:#8e8e8e;">43</span>
<span id="t228" class="t" style="left:4.2px;top:666px;font:400 12.29px/1 'DejaVu Sans Mono', 'Liberation Mono', monospace;color:#8e8e8e;">44</span>
<span id="t229" class="t" style="left:35.2px;top:666px;font:400 12.29px/1 'DejaVu Sans Mono', 'Liberation Mono', monospace;color:#000;letter-spacing:-0.014px;"><span style="color:#000094;font-weight:700;">Parameter</span><span style="color:#111;"> c(i,j) </span><span style="color:#0000dc;">'transport cost in thousands of dollars per</span></span>
<span id="t230" class="t" style="left:35.2px;top:681px;font:400 12.29px/1 'DejaVu Sans Mono', 'Liberation Mono', monospace;color:#000;letter-spacing:-0.014px;"><span style="color:#0000dc;">case'</span><span style="color:#111;">;</span></span>
<span id="t231" class="t" style="left:4.2px;top:696px;font:400 12.29px/1 'DejaVu Sans Mono', 'Liberation Mono', monospace;color:#8e8e8e;">45</span>
<span id="t232" class="t" style="left:35.2px;top:696px;font:400 12.29px/1 'DejaVu Sans Mono', 'Liberation Mono', monospace;color:#000;letter-spacing:-0.014px;"><span style="color:#111;">c(i,j) = f*d(i,j)/1000;</span></span>
<span id="t233" class="t" style="left:4.2px;top:711px;font:400 12.29px/1 'DejaVu Sans Mono', 'Liberation Mono', monospace;color:#8e8e8e;">46</span>
<span id="t234" class="t" style="left:4.2px;top:726px;font:400 12.29px/1 'DejaVu Sans Mono', 'Liberation Mono', monospace;color:#8e8e8e;">47</span>
<span id="t235" class="t" style="left:35.2px;top:726px;font:400 12.29px/1 'DejaVu Sans Mono', 'Liberation Mono', monospace;color:#000;letter-spacing:-0.014px;"><span style="color:#000094;font-weight:700;">Variable</span></span>
<span id="t236" class="t" style="left:4.2px;top:741px;font:400 12.29px/1 'DejaVu Sans Mono', 'Liberation Mono', monospace;color:#8e8e8e;">48</span>
<span id="t237" class="t" style="left:35.2px;top:741px;font:400 12.29px/1 'DejaVu Sans Mono', 'Liberation Mono', monospace;color:#000;letter-spacing:-0.014px;"><span style="color:#111;">   x(i,j) </span><span style="color:#0000dc;">'shipment quantities in cases'</span></span>
<span id="t238" class="t" style="left:4.2px;top:756px;font:400 12.29px/1 'DejaVu Sans Mono', 'Liberation Mono', monospace;color:#8e8e8e;">49</span>
<span id="t239" class="t" style="left:35.2px;top:756px;font:400 12.29px/1 'DejaVu Sans Mono', 'Liberation Mono', monospace;color:#000;letter-spacing:-0.014px;"><span style="color:#111;">   z      </span><span style="color:#0000dc;">'total transportation costs in thousands of dollars'</span><span style="color:#111;">;</span></span>
<svg style="left:22.2px;top:293.8px;width:5px;height:7.6px;" viewBox="0 0 5 7.6"><path d="M0 0l4.9 3.8L0 7.6z" fill="#2c3e50"/></svg>
<svg style="left:20.9px;top:445px;width:7.8px;height:4px;" viewBox="0 0 7.8 4"><path d="M0 0h7.8L3.9 4z" fill="#2c3e50"/></svg>
<svg style="left:20.9px;top:505px;width:7.8px;height:4px;" viewBox="0 0 7.8 4"><path d="M0 0h7.8L3.9 4z" fill="#2c3e50"/></svg>
<div style="left:94px;top:290px;width:61.8px;height:14.6px;background:#c8c8c8;border-radius:4.5px"></div>
<span id="t244" class="t" style="left:96.0px;top:291px;font:700 12.29px/1 'DejaVu Sans Mono', 'Liberation Mono', monospace;color:#fff;letter-spacing:-2px;">...</span>
<span id="t245" class="t" style="left:123.8px;top:291px;font:700 12.29px/1 'DejaVu Sans Mono', 'Liberation Mono', monospace;color:#fff;letter-spacing:-0.195px;">text</span>
<span id="t246" class="t" style="left:554.9px;top:227px;font:400 11px/1 'Liberation Sans', sans-serif;color:#000;letter-spacing:0.244px;">Help</span>
<div style="left:1122px;top:226.4px;width:10px;height:9.6px;border:1px solid #ababab;border-radius:2px;background:#e9e9e9"></div>
<div style="left:1125.4px;top:228.6px;width:4.4px;height:4.4px;border:1px solid #8a8a8a;background:#efefef"></div>
<div style="left:1124.2px;top:229.8px;width:4.4px;height:4.4px;border:1px solid #8a8a8a;background:#efefef"></div>
<div style="left:1141.2px;top:226.4px;width:10px;height:9.6px;border:1px solid #ababab;border-radius:2px;background:#e9e9e9"></div>
<svg style="left:1143.4px;top:228.4px;width:5.6px;height:5.6px;" viewBox="0 0 5.6 5.6"><path d="M.3.3l5 5M5.3.3l-5 5" stroke="#555" stroke-width="1" fill="none"/></svg>
<svg style="left:559.2px;top:248.2px;width:15.0px;height:12.6px;" viewBox="25.859859505812633 -1283.25 1612.2802809883747 1283.25" preserveAspectRatio="none"><path transform="scale(1,-1)" fill="#2c3e50" d="M1408 544C1408 546 1408 548 1407 550L832 1024L257 550C257 548 256 546 256 544V64C256 29 285 0 320 0H704V384H960V0H1344C1379 0 1408 29 1408 64ZM1631 613C1642 626 1640 647 1627 658L1408 840V1248C1408 1266 1394 1280 1376 1280H1184C1166 1280 1152 1266 1152 1248V1053L908 1257C866 1292 798 1292 756 1257L37 658C24 647 22 626 33 613L95 539C100 533 108 529 116 528C125 527 133 530 140 535L832 1112L1524 535C1530 530 1537 528 1545 528C1546 528 1547 528 1548 528C1556 529 1564 533 1569 539L1631 613Z"/></svg>
<div style="left:583.4px;top:250px;width:1px;height:11px;background:#d0d0d0"></div>
<div style="left:640.4px;top:250px;width:1px;height:11px;background:#d0d0d0"></div>
<div style="left:672.4px;top:250px;width:1px;height:11px;background:#d0d0d0"></div>
<div style="left:704.2px;top:250px;width:1px;height:11px;background:#d0d0d0"></div>
<svg style="left:591.2px;top:247.6px;width:15px;height:15px;" viewBox="0 0 15 15"><g fill="none" stroke="#2c3e50" stroke-width="2.3"><path d="M15 7.4H2.2"/><path d="M8.6 .9L1.7 7.4l6.9 6.5" stroke-linejoin="miter"/></g></svg>
<svg style="left:616.2px;top:247.6px;width:15px;height:15px;" viewBox="0 0 15 15"><g transform="translate(15 0) scale(-1 1)" fill="none" stroke="#a9a9a9" stroke-width="2.3"><path d="M15 7.4H2.2"/><path d="M8.6 .9L1.7 7.4l6.9 6.5" stroke-linejoin="miter"/></g></svg>
<svg style="left:648.8px;top:248px;width:14.2px;height:14px;" viewBox="0 -1408 1536 1536" preserveAspectRatio="none"><path transform="scale(1,-1)" fill="#2c3e50" d="M1536 1280C1536 1306 1520 1329 1497 1339C1473 1349 1445 1344 1427 1325L1297 1196C1156 1329 965 1408 768 1408C345 1408 0 1063 0 640C0 217 345 -128 768 -128C997 -128 1213 -27 1359 149C1369 162 1369 181 1357 192L1220 330C1213 336 1204 339 1195 339C1186 338 1177 334 1172 327C1074 200 927 128 768 128C486 128 256 358 256 640C256 922 486 1152 768 1152C899 1152 1023 1102 1117 1015L979 877C960 859 955 831 965 808C975 784 998 768 1024 768H1472C1507 768 1536 797 1536 832Z"/></svg>
<svg style="left:680.8px;top:248px;width:14.2px;height:14px;transform:scaleX(-1);" viewBox="0 -1413 1536 1541" preserveAspectRatio="none"><path transform="scale(1,-1)" fill="#b5b5b5" d="M1312 643C1312 341 1068 96 768 96C659 96 557 129 471 185L1225 938C1280 853 1312 752 1312 643ZM313 344C257 430 224 532 224 643C224 944 468 1189 768 1189C879 1189 982 1156 1068 1098ZM1536 643C1536 1068 1192 1413 768 1413C344 1413 0 1068 0 643C0 217 344 -128 768 -128C1192 -128 1536 217 1536 643Z"/></svg>
<svg style="left:714.2px;top:247px;width:11.6px;height:15.8px;" viewBox="0 -1408 1280 1513" preserveAspectRatio="none"><path transform="scale(1,-1)" fill="#2c3e50" d="M1164 1408C1133 1408 147 1408 116 1408C101 1408 86 1405 72 1399C28 1382 0 1341 0 1296V7C0 -38 28 -79 72 -96C86 -102 101 -105 116 -105C147 -105 176 -93 199 -72L640 352L1081 -72C1104 -93 1133 -104 1164 -104C1179 -104 1194 -102 1208 -96C1252 -79 1280 -38 1280 7V1296C1280 1341 1252 1382 1208 1399C1194 1405 1179 1408 1164 1408Z"/></svg>
<svg style="left:734px;top:253px;width:7.8px;height:4.2px;" viewBox="0 0 7.8 4.2"><path d="M0 0h7.8L3.9 4.2z" fill="#4a4a4a"/></svg>
<svg style="left:1120.9px;top:247.8px;width:14.2px;height:14.2px;" viewBox="0 0 14.2 14.2"><path d="M5.42 2.12L5.55 0.17L8.65 0.17L8.78 2.12L10.57 3.16L12.33 2.29L13.88 4.98L12.25 6.06L12.25 8.14L13.88 9.22L12.33 11.91L10.57 11.04L8.78 12.08L8.65 14.03L5.55 14.03L5.42 12.08L3.63 11.04L1.87 11.91L0.32 9.22L1.95 8.14L1.95 6.06L0.32 4.98L1.87 2.29L3.63 3.16z" fill="#2c3e50" stroke="#2c3e50" stroke-width="1" stroke-linejoin="round"/><circle cx="7.1" cy="7.1" r="2.34" fill="#efefef"/></svg>
<svg style="left:1142.4px;top:253px;width:7.4px;height:4.2px;" viewBox="0 0 7.4 4.2"><path d="M0 0h7.4L3.7 4.2z" fill="#4a4a4a"/></svg>
<div style="left:551px;top:275px;width:590px;height:488px;background:#fff"></div>
<div style="left:551px;top:275px;width:590px;height:30px;background:#e1e9f0"></div>
<div style="left:559px;top:285px;width:12px;height:2px;background:#253d7d"></div>
<div style="left:559px;top:289px;width:12px;height:2px;background:#253d7d"></div>
<div style="left:559px;top:293px;width:12px;height:2px;background:#253d7d"></div>
<svg style="left:928.5px;top:283.5px;width:18px;height:18px;" viewBox="0 0 18 18"><g stroke="#f5a01a" stroke-width="1.4" stroke-linecap="round" fill="none"><circle cx="9" cy="9" r="3.25" fill="#f9dcb0"/><path d="M14.70 9.00L17.30 9.00M13.03 13.03L14.87 14.87M9.00 14.70L9.00 17.30M4.97 13.03L3.13 14.87M3.30 9.00L0.70 9.00M4.97 4.97L3.13 3.13M9.00 3.30L9.00 0.70M13.03 4.97L14.87 3.13"/></g></svg>
<div style="left:955px;top:279px;width:182px;height:26px;background:#fff;border-radius:5px 5px 0 3px"></div>
<span id="t272" class="t" style="left:967.3px;top:285px;font:400 14px/1 'Liberation Sans', sans-serif;color:#7b7b7b;letter-spacing:0.041px;">Search...</span>
<svg style="left:1116.4px;top:285.6px;width:14px;height:14px;" viewBox="0 0 14 14"><g fill="none" stroke="#3b55a0" stroke-width="1.2"><circle cx="8.2" cy="5.8" r="5"/><path d="M4.6 9.4L.8 13.2" stroke-width="1.8" stroke-linecap="round"/></g></svg>
<div style="left:1141px;top:275px;width:15px;height:488px;background:#f1f1f1"></div>
<svg style="left:1145px;top:280.8px;width:7.4px;height:4.4px;" viewBox="0 0 7.4 4.4"><path d="M0 4.4L3.7 0l3.7 4.4z" fill="#505050"/></svg>
<div style="left:1143px;top:652px;width:11px;height:30px;background:#c1c1c1"></div>
<span id="t277" class="t" style="left:563.5px;top:323px;font:400 12.8px/1 'Liberation Sans', sans-serif;color:#2b1f14;"><b>output</b> <i>(string)</i>: Listing file name</span>
<span id="t278" class="t" style="left:584.25px;top:363px;font:400 12.8px/1 'Liberation Sans', sans-serif;color:#2b1f14;">Synonym: OO</span>
<span id="t279" class="t" style="left:584.25px;top:390px;font:400 12.8px/1 'Liberation Sans', sans-serif;color:#2b1f14;">Available: Command line</span>
<span id="t280" class="t" style="left:584.25px;top:417px;font:400 12.8px/1 'Liberation Sans', sans-serif;color:#2b1f14;">By default, the name of the output file (or listing file) is automatically created by combining</span>
<span id="t281" class="t" style="left:584.25px;top:436px;font:400 12.8px/1 'Liberation Sans', sans-serif;color:#2b1f14;">the name of the input file with the current directory and applying the standard output file</span>
<span id="t282" class="t" style="left:584.25px;top:455px;font:400 12.8px/1 'Liberation Sans', sans-serif;color:#2b1f14;">extension <span style="font:12px/1 'Liberation Mono', monospace;background:#f4f4f4;padding:3px 0 2px">.lst</span>. This option may be used to specify an alternative name for the output file. If</span>
<span id="t283" class="t" style="left:584.25px;top:475px;font:400 12.8px/1 'Liberation Sans', sans-serif;color:#2b1f14;">the value is a file name without an absolute path, the current directory will compose the final</span>
<span id="t284" class="t" style="left:584.25px;top:494px;font:400 12.8px/1 'Liberation Sans', sans-serif;color:#2b1f14;">name. If the absolute path is included in the file name, then the name is used as specified.</span>
<span id="t285" class="t" style="left:584.25px;top:521px;font:400 12.8px/1 'Liberation Sans', sans-serif;color:#2b1f14;">Consider the following examples:</span>
<div style="left:584.75px;top:543.75px;width:522px;height:72px;background:#eff2f3;border:1px solid #f5f6f7"></div>
<span id="t287" class="t" style="left:598.5px;top:559px;font:400 12px/1 'Liberation Mono', monospace;color:#2b1f14;">gams trnsport</span>
<span id="t288" class="t" style="left:598.5px;top:575px;font:400 12px/1 'Liberation Mono', monospace;color:#2b1f14;">gams trnsport o=trnsportOut</span>
<span id="t289" class="t" style="left:598.5px;top:591px;font:400 12px/1 'Liberation Mono', monospace;color:#2b1f14;">gams trnsport o=c:\test\trnsport.out</span>
<span id="t290" class="t" style="left:584.25px;top:628px;font:400 12.8px/1 'Liberation Sans', sans-serif;color:#2b1f14;">Note that the first call will create an output file called <span style="font:12px/1 'Liberation Mono', monospace;background:#f4f4f4;padding:3px 0 2px">trnsport.lst</span> in the current directory.</span>
<span id="t291" class="t" style="left:584.25px;top:647px;font:400 12.8px/1 'Liberation Sans', sans-serif;color:#2b1f14;">The second call will create a file called <span style="font:12px/1 'Liberation Mono', monospace;background:#f4f4f4;padding:3px 0 2px">trnsportOut</span> (without extension) in the current</span>
<span id="t292" class="t" style="left:584.25px;top:666px;font:400 12.8px/1 'Liberation Sans', sans-serif;color:#2b1f14;">directory. The last call will create the file as listed. If the directory <span style="font:12px/1 'Liberation Mono', monospace;background:#f4f4f4;padding:3px 0 2px">c:\test</span> does not exist,</span>
<span id="t293" class="t" style="left:584.25px;top:685px;font:400 12.8px/1 'Liberation Sans', sans-serif;color:#2b1f14;">GAMS will exit with a parameter error.</span>
<span id="t294" class="t" style="left:584.25px;top:713px;font:400 12.8px/1 'Liberation Sans', sans-serif;color:#2b1f14;">Creation of the output file can be suppressed by setting the command line parameter</span>
<span id="t295" class="t" style="left:584.25px;top:732px;font:400 12.8px/1 'Liberation Sans', sans-serif;color:#2b1f14;"><b style="color:#4665a2">writeOutput</b> to <span style="font:12px/1 'Liberation Mono', monospace;background:#f4f4f4;padding:3px 0 2px">0</span>.</span>
</div></body></html>
